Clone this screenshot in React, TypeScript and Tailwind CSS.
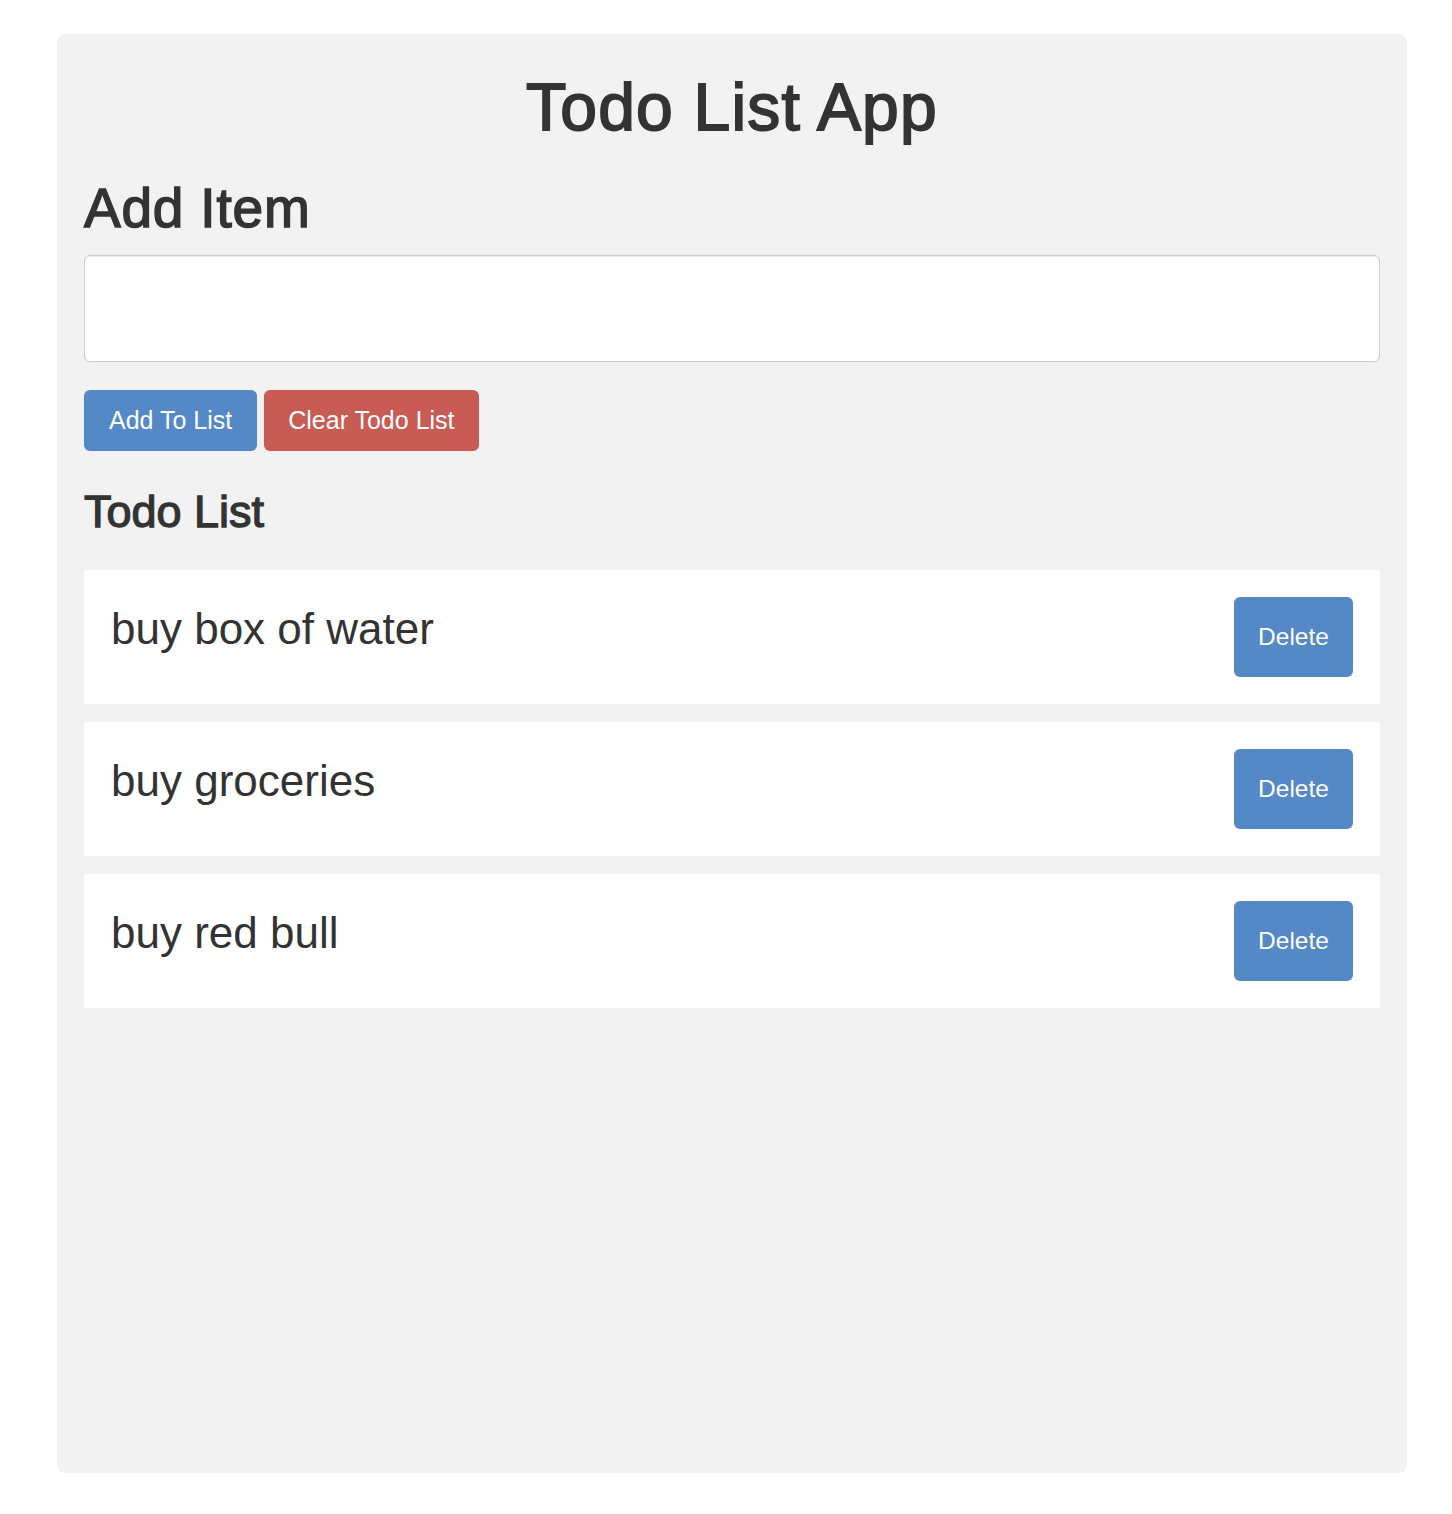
import React, { useState } from "react";

export default function App() {
  const [item, setItem] = useState<string>("");
  const [todos, setTodos] = useState<string[]>([
    "buy box of water",
    "buy groceries",
    "buy red bull",
  ]);

  const addItem = () => {
    if (!item.trim()) return;
    setTodos((prev) => [...prev, item.trim()]);
    setItem("");
  };

  return (
    <div className="min-h-[1514px] bg-white pt-[34px] font-['Liberation_Sans',Arial,sans-serif] text-[#333]">
      <div className="ml-[57px] h-[1439px] w-[1350px] rounded-[8px] bg-[#f2f2f2] px-[27px] pt-[37px]">
        {/* headings: regular face thickened a bit to look like a medium weight */}
        <h1 className="text-center text-[66px] leading-[72px] tracking-[1.2px] [-webkit-text-stroke:1.8px_#333]">
          Todo List App
        </h1>

        <h2 className="mt-[35px] text-[55px] leading-[60px] tracking-[0.8px] [-webkit-text-stroke:1.5px_#333]">
          Add Item
        </h2>
        <input
          type="text"
          value={item}
          onChange={(e) => setItem(e.target.value)}
          className="mt-[17px] block h-[107px] w-full rounded-[6px] border border-[#ccc] bg-white px-5 text-[28px] shadow-[inset_0_1px_1px_rgba(0,0,0,0.075)] outline-none"
        />

        <div className="mt-[28px] flex gap-[7px]">
          <button
            onClick={addItem}
            className="h-[61px] rounded-[6px] bg-[#5488c6] px-[25px] text-[25px] text-white"
          >
            Add To List
          </button>
          <button
            onClick={() => setTodos([])}
            className="h-[61px] rounded-[6px] bg-[#c95b55] px-[24px] text-[25px] text-white"
          >
            Clear Todo List
          </button>
        </div>

        <h3 className="mt-[35px] text-[45px] leading-[52px] [-webkit-text-stroke:1.3px_#333]">
          Todo List
        </h3>

        <ul className="mt-[32px] flex flex-col gap-[18px]">
          {todos.map((todo, index) => (
            <li
              key={index}
              className="flex items-start justify-between bg-white p-[27px]"
            >
              <span className="text-[44px] leading-[63px]">{todo}</span>
              <button
                onClick={() =>
                  setTodos((prev) => prev.filter((_, i) => i !== index))
                }
                className="h-[80px] w-[119px] rounded-[6px] bg-[#5488c6] text-[24.5px] text-white"
              >
                Delete
              </button>
            </li>
          ))}
        </ul>
      </div>
    </div>
  );
}
